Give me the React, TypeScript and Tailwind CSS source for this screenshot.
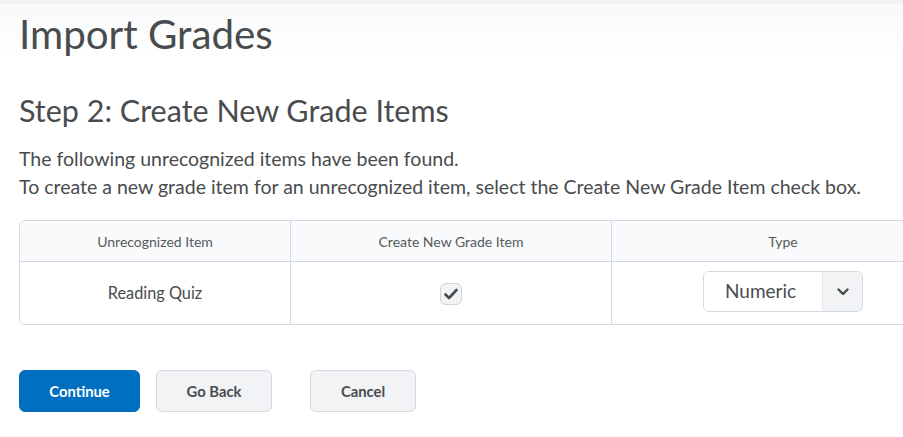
import React from "react";

function Check() {
  return (
    <svg width="14" height="12" viewBox="0 0 14 12" fill="none">
      <path d="M1.5 6.5 L5 10 L12.5 2" stroke="#494c4e" strokeWidth="2.6" strokeLinecap="round" strokeLinejoin="round" />
    </svg>
  );
}

function Chevron() {
  return (
    <svg width="12" height="8" viewBox="0 0 12 8" fill="none">
      <path d="M1.5 1.5 L6 6 L10.5 1.5" stroke="#494c4e" strokeWidth="2.4" strokeLinecap="round" strokeLinejoin="round" />
    </svg>
  );
}

export default function App() {
  return (
    <div
      className="w-[903px] h-[437px] overflow-hidden bg-white text-[#494c4e]"
      style={{ fontFamily: "Lato, 'Open Sans', sans-serif" }}
    >
      <div className="h-[4px] bg-[#f1f2f4]" />
      <div className="bg-gradient-to-b from-[#f7f9fb] to-white px-[19px] pt-[6px] pb-[0px]">
        <h1 className="text-[40.3px] leading-[48px] font-normal">Import Grades</h1>
      </div>
      <div className="px-[19px]">
        <h2 className="mt-[34px] text-[30.5px] leading-[36px] font-normal">Step 2: Create New Grade Items</h2>
        <p className="mt-[17px] text-[19.5px] leading-[28px]">
          The following unrecognized items have been found.
          <br />
          To create a new grade item for an unrecognized item, select the Create New Grade Item check box.
        </p>
        <div className="mt-[19px] w-[936px] rounded-[6px] border border-[#d3d9e3] overflow-hidden">
          <div className="grid grid-cols-[271px_321px_1fr] bg-[#f9fafb] h-[41px] border-b border-[#d3d9e3] text-[14px] text-[#565a5c]">
            <div className="flex items-center justify-center border-r border-[#d3d9e3]">Unrecognized Item</div>
            <div className="flex items-center justify-center border-r border-[#d3d9e3]">Create New Grade Item</div>
            <div className="flex items-center justify-center">Type</div>
          </div>
          <div className="grid grid-cols-[271px_321px_1fr] h-[62px] text-[16.3px]">
            <div className="flex items-center justify-center border-r border-[#d3d9e3]">Reading Quiz</div>
            <div className="flex items-center justify-center border-r border-[#d3d9e3]">
              <div className="w-[22px] h-[22px] rounded-[6px] border border-[#cdd5dc] bg-[#f1f3f5] flex items-center justify-center mt-[2px]">
                <Check />
              </div>
            </div>
            <div className="flex items-center justify-center">
              <div className="flex h-[41px] w-[160px] rounded-[6px] border border-[#d3d9e3] overflow-hidden -mt-[3px]">
                <div className="flex-1 bg-white flex items-center pl-[21px] text-[19px] text-[#494c4e]">Numeric</div>
                <div className="w-[40px] bg-[#f1f3f5] border-l border-[#e3e7ec] flex items-center justify-center">
                  <Chevron />
                </div>
              </div>
            </div>
          </div>
        </div>
        <div className="mt-[45px] flex items-center">
          <button className="h-[42px] w-[121px] rounded-[6px] bg-[#006fbf] border border-[#006fbf] text-white text-[14.8px] font-bold">Continue</button>
          <button className="ml-[16px] h-[42px] w-[116px] rounded-[6px] bg-[#f1f3f5] border border-[#d3d9e3] text-[#494c4e] text-[14.8px] font-bold">Go Back</button>
          <button className="ml-[38px] h-[42px] w-[106px] rounded-[6px] bg-[#f1f3f5] border border-[#d3d9e3] text-[#494c4e] text-[14.8px] font-bold">Cancel</button>
        </div>
      </div>
    </div>
  );
}
